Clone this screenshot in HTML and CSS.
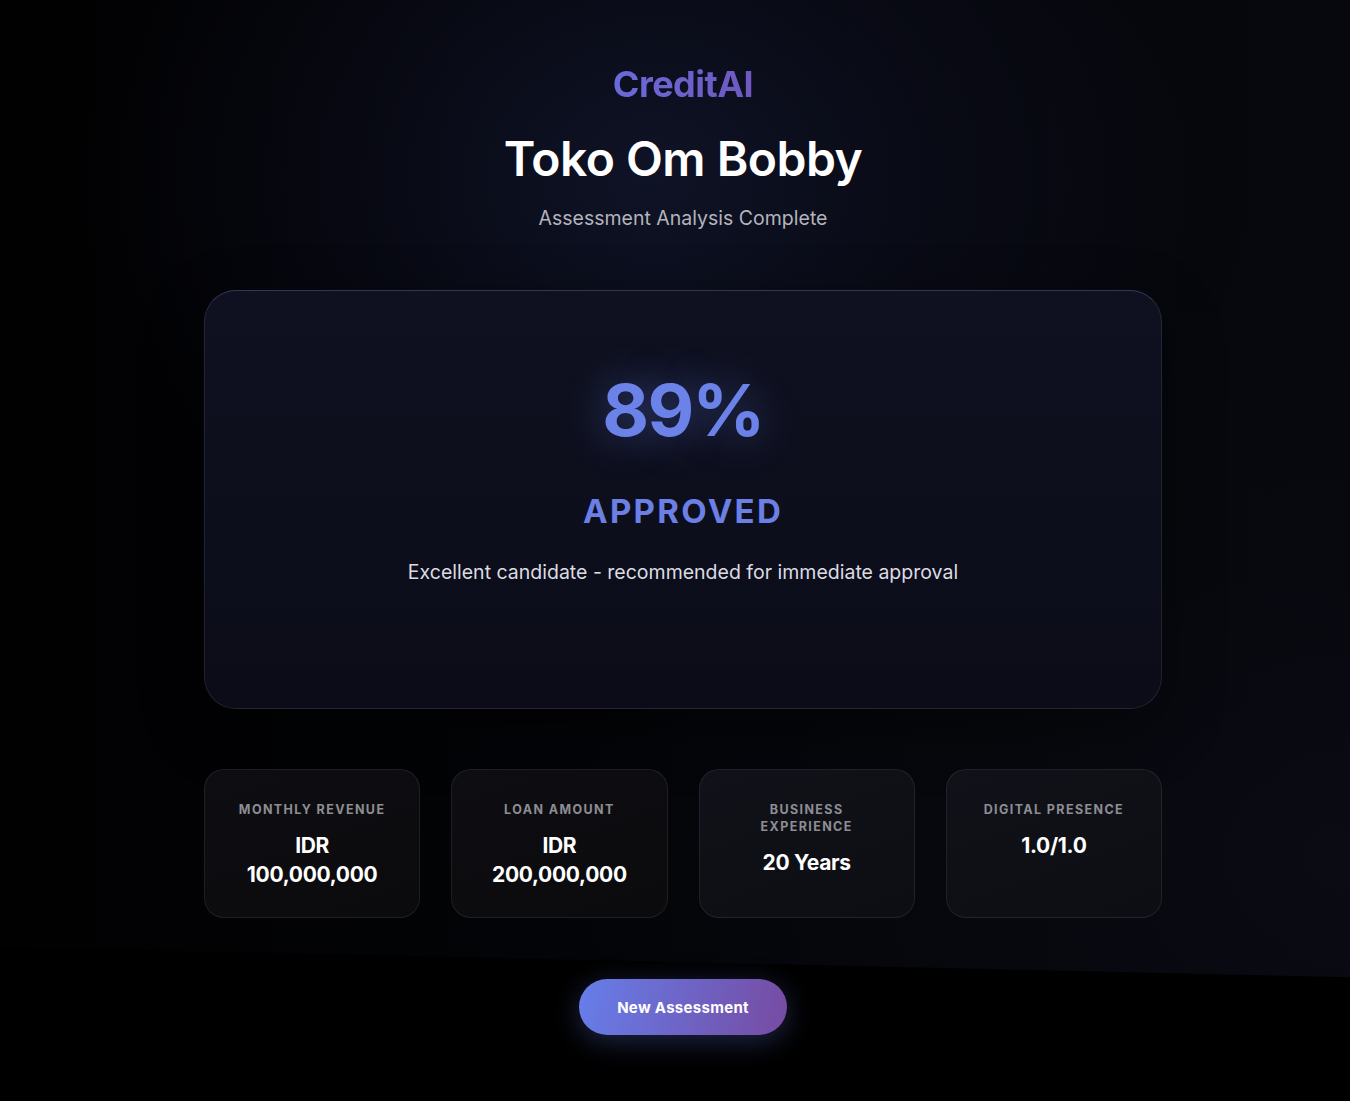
FILE: index.html
```html
<!DOCTYPE html>
<html lang="en">
<head>
<meta charset="utf-8">
<title>CreditAI - Toko Om Bobby</title>
<link rel="stylesheet" href="styles.css">
</head>
<body>
<main class="page">
  <header class="hero">
    <div class="brand">CreditAI</div>
    <h1 class="title">Toko Om Bobby</h1>
    <p class="subtitle">Assessment Analysis Complete</p>
  </header>

  <section class="result-card">
    <div class="score">89%</div>
    <div class="verdict">APPROVED</div>
    <p class="note">Excellent candidate - recommended for immediate approval</p>
  </section>

  <section class="stats">
    <div class="stat">
      <div class="stat-label">Monthly Revenue</div>
      <div class="stat-value">IDR 100,000,000</div>
    </div>
    <div class="stat">
      <div class="stat-label">Loan Amount</div>
      <div class="stat-value">IDR 200,000,000</div>
    </div>
    <div class="stat">
      <div class="stat-label">Business Experience</div>
      <div class="stat-value">20 Years</div>
    </div>
    <div class="stat">
      <div class="stat-label">Digital Presence</div>
      <div class="stat-value">1.0/1.0</div>
    </div>
  </section>

  <div class="actions">
    <button class="btn-primary" type="button">New Assessment</button>
  </div>
</main>
</body>
</html>
```

FILE: styles.css
```css
* { box-sizing: border-box; }

html, body {
  margin: 0;
  padding: 0;
  min-height: 100%;
  background: #000;
}

body {
  font-family: Inter, "Noto Sans", "Liberation Sans", sans-serif;
  color: #fff;
  min-height: 1101px;
  background:
    linear-gradient(181.3deg, rgba(0,0,0,0) 0%, rgba(0,0,0,0) 86.3%, #000 86.4%),
    radial-gradient(ellipse 560px 460px at 48% 16%, #0f1326 0%, rgba(12,14,30,0.55) 50%, rgba(0,0,0,0) 100%),
    radial-gradient(ellipse 800px 650px at 100% 78%, #0a0b13 0%, rgba(8,9,15,0.6) 50%, rgba(0,0,0,0) 100%),
    linear-gradient(90deg, #010102 0%, #030407 40%, #07080e 100%);
}

.page {
  display: flex;
  flex-direction: column;
  align-items: center;
  padding: 61px 0 64px 16px;
}

.hero {
  display: flex;
  flex-direction: column;
  align-items: center;
  text-align: center;
}

.brand {
  font-size: 36px;
  line-height: 47px;
  font-weight: 700;
  letter-spacing: -0.5px;
  color: #6b5fcc;
  background: linear-gradient(90deg, #6a6ad8 0%, #6f58c0 100%);
  -webkit-background-clip: text;
  background-clip: text;
  -webkit-text-fill-color: transparent;
}

.title {
  margin: 23px 0 0;
  font-size: 48px;
  line-height: 56px;
  font-weight: 600;
  letter-spacing: -0.5px;
  color: #ffffff;
}

.subtitle {
  margin: 19px 0 0;
  font-size: 19.5px;
  line-height: 24px;
  color: #b4b4bd;
  font-weight: 400;
}

.result-card {
  width: 958px;
  height: 419px;
  margin-top: 60px;
  padding: 83px 40px;
  border-radius: 32px;
  border: 1px solid rgba(255,255,255,0.09);
  border-top-color: rgba(160,165,230,0.28);
  background: linear-gradient(180deg, #0f1120 0%, #0d0e1c 60%, #0c0c18 100%);
  box-shadow: 0 20px 60px rgba(0,0,0,0.45);
  display: flex;
  flex-direction: column;
  align-items: center;
  text-align: center;
}

.score {
  font-size: 72px;
  line-height: 72px;
  font-weight: 700;
  letter-spacing: -1.8px;
  color: #6b83e8;
  text-shadow: 0 0 40px rgba(102,126,234,0.45);
}

.verdict {
  margin-top: 45px;
  font-size: 33px;
  line-height: 40px;
  font-weight: 700;
  letter-spacing: 2.3px;
  color: #6b7fe4;
}

.note {
  margin: 28px 0 0;
  font-size: 19.5px;
  line-height: 26px;
  color: #dcdce2;
}

.stats {
  width: 958px;
  margin-top: 60px;
  display: grid;
  grid-template-columns: repeat(4, 1fr);
  gap: 31px;
}

.stat {
  height: 149px;
  padding: 31px 24px;
  border-radius: 20px;
  border: 1px solid rgba(255,255,255,0.08);
  background: linear-gradient(160deg, #0e0e12 0%, #0b0b0e 100%);
  text-align: center;
}

.stat:nth-child(3), .stat:nth-child(4) {
  background: linear-gradient(160deg, #111219 0%, #0d0e13 100%);
}

.stat-label {
  font-size: 12.5px;
  line-height: 17px;
  font-weight: 700;
  letter-spacing: 1.4px;
  text-transform: uppercase;
  color: #8d8d94;
}

.stat-value {
  margin-top: 13px;
  font-size: 21px;
  line-height: 29px;
  font-weight: 700;
  color: #ffffff;
  letter-spacing: -0.3px;
}

.actions {
  margin-top: 61px;
  display: flex;
  justify-content: center;
}

.btn-primary {
  width: 208px;
  height: 56px;
  border: 0;
  border-radius: 28px;
  font-family: inherit;
  font-size: 15px;
  font-weight: 700;
  letter-spacing: 0.3px;
  color: #ffffff;
  background: linear-gradient(100deg, #667eea 0%, #764ba2 100%);
  box-shadow: 0 6px 28px rgba(102,126,234,0.3);
  cursor: pointer;
}
```
